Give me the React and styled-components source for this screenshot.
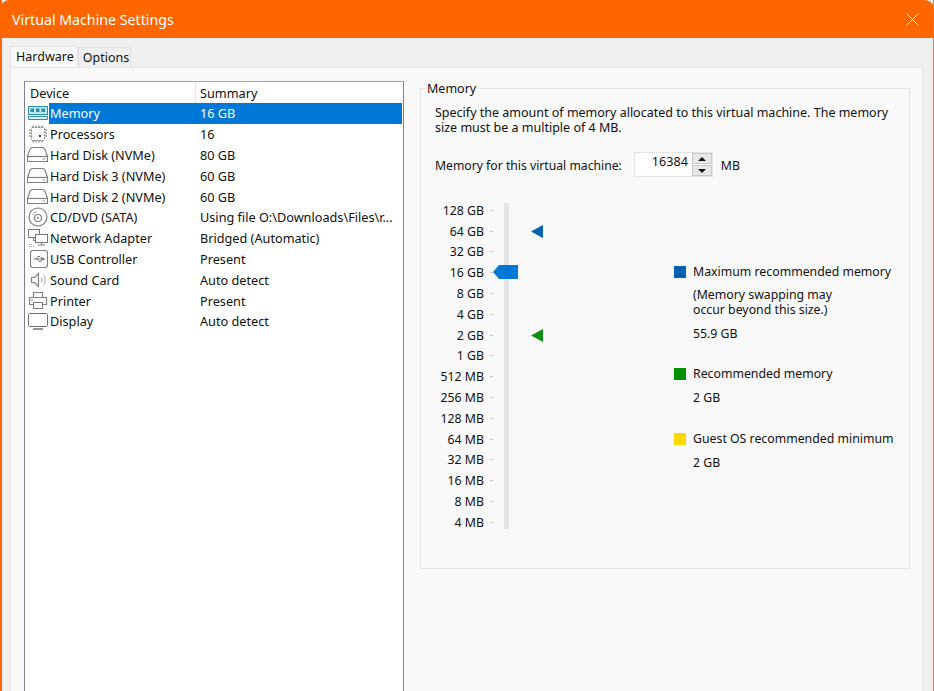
import styled, { createGlobalStyle } from "styled-components";

const GlobalStyle = createGlobalStyle`
  html, body { margin: 0; padding: 0; background: #fff; }
  body { font-family: "Noto Sans", "Open Sans", sans-serif; font-size: 12.3px; color: #111; }
`;

const Window = styled.div`
  width: 934px;
  height: 691px;
  overflow: hidden;
  display: flex;
  flex-direction: column;
  background: #f0f0f0;
  border-left: 2px solid #ff6600;
  border-right: 1px solid #e8772e;
  box-sizing: border-box;
`;

const TitleBar = styled.div`
  height: 38px;
  flex: none;
  margin: 0 -1px 0 -2px;
  display: flex;
  align-items: center;
  justify-content: space-between;
  padding: 0 15px 0 12px;
  background: #ff6600;
  border-radius: 9px 9px 0 0;
  color: #fff;
  font-size: 14.2px;
`;

const Body = styled.div`
  flex: 1;
  min-height: 0;
  padding: 7px 10px 0 8px;
  display: flex;
  flex-direction: column;
`;

const TabStrip = styled.div`
  display: flex;
  height: 22px;
  align-items: flex-end;
  flex: none;
  font-size: 12.5px;
`;

const Tab = styled.div`
  height: ${(p) => (p.$active ? 21 : 20)}px;
  padding: ${(p) => (p.$active ? "0 3px 2px 5px" : "0 1px 0 4px")};
  display: flex;
  align-items: center;
  background: ${(p) => (p.$active ? "#f9f9f9" : "#f0f0f0")};
  border: 1px solid #e2e2e2;
  border-bottom: 0;
  box-sizing: border-box;
`;

const Panel = styled.div`
  flex: 1;
  min-height: 0;
  display: flex;
  gap: 16px;
  padding: 13px 12px 0 13px;
  background: #f9f9f9;
  border: 1px solid #e6e6e6;
  border-bottom: 0;
`;

const DeviceList = styled.div`
  width: 378px;
  flex: none;
  background: #fff;
  border: 1px solid #a0a0a8;
  border-left-color: #80838f;
  border-right-color: #80838f;
  border-bottom: 0;
  font-size: 12.7px;
`;

const HeaderRow = styled.div`
  display: grid;
  grid-template-columns: 170px 1fr;
  height: 21px;
  align-items: center;
`;

const HeaderCell = styled.div`
  height: 100%;
  display: flex;
  align-items: center;
  padding-left: 5px;
  & + & { border-left: 1px solid #e5e5e5; padding-left: 4px; }
`;

const Row = styled.div`
  display: grid;
  grid-template-columns: 24px 146px 1fr;
  height: 20.8px;
  align-items: center;
  margin-right: 1px;
`;

const IconCell = styled.div`
  display: flex;
  align-items: center;
  justify-content: flex-end;
  padding-right: 1px;
`;

const NameCell = styled.div`
  height: 100%;
  display: flex;
  align-items: center;
  padding-left: 1px;
  white-space: nowrap;
  box-sizing: border-box;
  color: ${(p) => (p.$selected ? "#fff" : "inherit")};
  background: ${(p) => (p.$selected ? "#0078d7" : "transparent")};
`;

const SummaryCell = styled(NameCell)`
  padding-left: 5px;
  min-width: 0;
  overflow: hidden;
`;

const GroupBox = styled.fieldset`
  flex: 1;
  margin: 0;
  height: 488px;
  box-sizing: border-box;
  padding: 0 0 0 14px;
  border: 1px solid #e4e4e4;
  min-width: 0;
  legend { margin-left: -8px; padding: 0 3px 0 0; line-height: 15px; font-size: 12.5px; }
`;

const Description = styled.p`
  margin: 9px 0 0 0;
  line-height: 15px;
  width: 470px;
  font-size: 12.5px;
`;

const AmountRow = styled.div`
  display: flex;
  align-items: center;
  margin-top: 17px;
  height: 25px;
`;

const AmountLabel = styled.span`
  padding-top: 2px;
  font-size: 12.2px;
`;

const Spin = styled.div`
  display: flex;
  width: 79px;
  height: 25px;
  margin-left: 12px;
  background: #fff;
  border: 1px solid #e4e4e4;
  box-sizing: border-box;
`;

const SpinValue = styled.div`
  flex: 1;
  text-align: right;
  padding-right: 4px;
  line-height: 17px;
  font-size: 12.6px;
`;

const SpinButtons = styled.div`
  width: 20px;
  display: flex;
  flex-direction: column;
  gap: 1px;
`;

const SpinButton = styled.div`
  flex: 1;
  background: #e8e8e8;
  border: 1px solid #c8c8c8;
  display: flex;
  align-items: center;
  justify-content: center;
  &::before {
    content: "";
    border-left: 4px solid transparent;
    border-right: 4px solid transparent;
    ${(p) => (p.$down ? "border-top: 4px solid #111;" : "border-bottom: 4px solid #111;")}
  }
`;

const Unit = styled.span`
  margin-left: 8px;
  padding-top: 2px;
`;

const MemoryArea = styled.div`
  display: flex;
  margin-top: 23px;
`;

const Scale = styled.div`
  position: relative;
  width: 124px;
`;

const Track = styled.div`
  position: absolute;
  left: 69px;
  top: 3px;
  width: 5px;
  height: 326px;
  background: #e2e4e6;
`;

const ScaleRow = styled.div`
  position: relative;
  display: grid;
  grid-template-columns: 49px 9px 38px 12px;
  height: 20.8px;
  align-items: center;
`;

const ScaleLabel = styled.div`
  text-align: right;
  white-space: nowrap;
`;

const Tick = styled.div`
  width: 3px;
  height: 1px;
  background: #c9c9c9;
  justify-self: end;
`;

const Thumb = styled.svg`
  position: absolute;
  left: 58px;
  top: 3px;
`;

const Marker = styled.svg`
  grid-column: 4;
  display: block;
`;

const Legend = styled.div`
  margin-left: 115px;
  padding-top: 64px;
  display: flex;
  flex-direction: column;
`;

const LegendItem = styled.div`
  display: grid;
  grid-template-columns: 19px 1fr;
  margin-bottom: ${(p) => p.$after}px;
`;

const Swatch = styled.div`
  width: 12px;
  height: 12px;
  margin-top: 2px;
  background: ${(p) => p.$color};
`;

const LegendTitle = styled.div`
  line-height: 16px;
  white-space: nowrap;
`;

const LegendNote = styled.div`
  grid-column: 2;
  margin-top: ${(p) => p.$top}px;
  line-height: 15px;
  white-space: nowrap;
`;

const stroke = { fill: "none", stroke: "#808080", strokeWidth: 1.2 };

const icons = {
  memory: (
    <svg width="20" height="16" viewBox="0 0 20 16">
      <rect x="0.5" y="1.5" width="19" height="8" fill="#bfe6ee" stroke="#2f8fa8" />
      <rect x="2.5" y="3.5" width="3.5" height="3.5" fill="#2f8fa8" />
      <rect x="8" y="3.5" width="3.5" height="3.5" fill="#2f8fa8" />
      <rect x="13.5" y="3.5" width="3.5" height="3.5" fill="#2f8fa8" />
      <path d="M0.5 11.5h19v3h-19z" fill="#d6f0f4" stroke="#2f8fa8" />
    </svg>
  ),
  cpu: (
    <svg width="20" height="18" viewBox="0 0 20 18">
      <rect x="3.5" y="2.5" width="13" height="13" rx="1" fill="#fff" stroke="#8a8a8a" strokeDasharray="2 1" />
      <path d="M5 0.5v2M8 0.5v2M11 0.5v2M14 0.5v2M5 15.5v2M8 15.5v2M11 15.5v2M14 15.5v2M1 5h2M1 8h2M1 11h2M17 5h2M17 8h2M17 11h2" stroke="#666" />
      <rect x="11" y="10" width="2" height="2" fill="#333" />
    </svg>
  ),
  disk: (
    <svg width="21" height="17" viewBox="0 0 21 17">
      <path d="M5 1.5h11l2 1.500 2.500 7.500v5h-20v-5l2.500-7.500z" {...stroke} />
      <path d="M0.500 10.500h20" {...stroke} />
      <path d="M15.500 13h3" stroke="#9a9a9a" />
    </svg>
  ),
  cd: (
    <svg width="20" height="20" viewBox="0 0 20 20">
      <circle cx="10" cy="10" r="9" {...stroke} />
      <circle cx="10" cy="11" r="3.500" {...stroke} />
      <path d="M4.500 8a6 6 0 0 1 4-3.500" stroke="#a5a5a5" fill="none" />
      <circle cx="10" cy="11" r="1" fill="#7d7d7d" />
    </svg>
  ),
  network: (
    <svg width="20" height="18" viewBox="0 0 20 18">
      <path d="M1 17.500h6M1 15.500h3" stroke="#aaa" strokeDasharray="1 1" />
      <rect x="0.500" y="0.500" width="11" height="8" fill="#fff" stroke="#777" />
      <rect x="7.500" y="5.500" width="12" height="8" fill="#fff" stroke="#777" />
      <path d="M13.500 13.500v2M10 16h7" stroke="#777" fill="none" />
      <path d="M5.500 8.500v3h2" stroke="#777" fill="none" />
    </svg>
  ),
  usb: (
    <svg width="18" height="18" viewBox="0 0 18 18">
      <rect x="0.500" y="0.500" width="17" height="17" rx="2.500" {...stroke} />
      <path d="M3.500 9h10M11.500 7.500l3 1.500-3 1.500zM6 9l2-2.500h2M7 9l2 2.500h2" stroke="#777" fill="none" />
    </svg>
  ),
  sound: (
    <svg width="18" height="16" viewBox="0 0 18 16">
      <path d="M1.500 5.500h3l4-4v13l-4-4h-3z" {...stroke} />
      <path d="M11 5.500a3.500 3.500 0 0 1 0 5M13.500 3.500a6.500 6.500 0 0 1 0 9" stroke="#9a9a9a" fill="none" />
    </svg>
  ),
  printer: (
    <svg width="20" height="17" viewBox="0 0 20 17">
      <path d="M5.500 5.500v-5h9v5" {...stroke} />
      <path d="M5.500 12.500h-4v-7h17v7h-4" {...stroke} />
      <rect x="5.500" y="10.500" width="9" height="6" fill="#fff" stroke="#7d7d7d" />
      <path d="M3 8h2" stroke="#7d7d7d" />
    </svg>
  ),
  display: (
    <svg width="20" height="17" viewBox="0 0 20 17">
      <rect x="0.500" y="0.500" width="19" height="13" rx="1" fill="#fff" stroke="#6f6f6f" />
      <path d="M5 16h10" stroke="#6f6f6f" strokeWidth="1.500" />
    </svg>
  ),
};

const devices = [
  { icon: "memory", name: "Memory", summary: "16 GB" },
  { icon: "cpu", name: "Processors", summary: "16" },
  { icon: "disk", name: "Hard Disk (NVMe)", summary: "80 GB" },
  { icon: "disk", name: "Hard Disk 3 (NVMe)", summary: "60 GB" },
  { icon: "disk", name: "Hard Disk 2 (NVMe)", summary: "60 GB" },
  { icon: "cd", name: "CD/DVD (SATA)", summary: "Using file O:\\Downloads\\Files\\r..." },
  { icon: "network", name: "Network Adapter", summary: "Bridged (Automatic)" },
  { icon: "usb", name: "USB Controller", summary: "Present" },
  { icon: "sound", name: "Sound Card", summary: "Auto detect" },
  { icon: "printer", name: "Printer", summary: "Present" },
  { icon: "display", name: "Display", summary: "Auto detect" },
];

const scale = [
  "128 GB", "64 GB", "32 GB", "16 GB", "8 GB", "4 GB", "2 GB", "1 GB",
  "512 MB", "256 MB", "128 MB", "64 MB", "32 MB", "16 MB", "8 MB", "4 MB",
];

const markers = { "64 GB": "#0063b1", "2 GB": "#109010" };

export default function App() {
  return (
    <Window>
      <GlobalStyle />
      <TitleBar>
        <span>Virtual Machine Settings</span>
        <svg width="13" height="13" viewBox="0 0 13 13">
          <path d="M0.500 0.500l12 12M12.500 0.500l-12 12" stroke="#fff" strokeWidth="1" fill="none" />
        </svg>
      </TitleBar>
      <Body>
        <TabStrip>
          <Tab $active>Hardware</Tab>
          <Tab>Options</Tab>
        </TabStrip>
        <Panel>
          <DeviceList>
            <HeaderRow>
              <HeaderCell>Device</HeaderCell>
              <HeaderCell>Summary</HeaderCell>
            </HeaderRow>
            {devices.map((d, i) => (
              <Row key={d.name}>
                <IconCell>{icons[d.icon]}</IconCell>
                <NameCell $selected={i === 0}>{d.name}</NameCell>
                <SummaryCell $selected={i === 0}>{d.summary}</SummaryCell>
              </Row>
            ))}
          </DeviceList>
          <GroupBox>
            <legend>Memory</legend>
            <Description>
              Specify the amount of memory allocated to this virtual machine. The memory size must be a multiple of 4 MB.
            </Description>
            <AmountRow>
              <AmountLabel>Memory for this virtual machine:</AmountLabel>
              <Spin>
                <SpinValue>16384</SpinValue>
                <SpinButtons>
                  <SpinButton />
                  <SpinButton $down />
                </SpinButtons>
              </Spin>
              <Unit>MB</Unit>
            </AmountRow>
            <MemoryArea>
              <Scale>
                <Track />
                {scale.map((label) => (
                  <ScaleRow key={label}>
                    <ScaleLabel>{label}</ScaleLabel>
                    <Tick />
                    {label === "16 GB" && (
                      <Thumb width="25" height="14" viewBox="0 0 25 14">
                        <path d="M0 7L4 2.500L6 0H25V14H6L4 11.500Z" fill="#0078d7" />
                      </Thumb>
                    )}
                    {markers[label] && (
                      <Marker width="12" height="13" viewBox="0 0 12 13">
                        <path d="M0 6.500L12 0V13Z" fill={markers[label]} />
                      </Marker>
                    )}
                  </ScaleRow>
                ))}
              </Scale>
              <Legend>
                <LegendItem $after={25}>
                  <Swatch $color="#0063b1" />
                  <LegendTitle>Maximum recommended memory</LegendTitle>
                  <LegendNote $top={7}>(Memory swapping may<br />occur beyond this size.)</LegendNote>
                  <LegendNote $top={9}>55.9 GB</LegendNote>
                </LegendItem>
                <LegendItem $after={26}>
                  <Swatch $color="#009000" />
                  <LegendTitle>Recommended memory</LegendTitle>
                  <LegendNote $top={8}>2 GB</LegendNote>
                </LegendItem>
                <LegendItem $after={0}>
                  <Swatch $color="#ffd800" />
                  <LegendTitle>Guest OS recommended minimum</LegendTitle>
                  <LegendNote $top={8}>2 GB</LegendNote>
                </LegendItem>
              </Legend>
            </MemoryArea>
          </GroupBox>
        </Panel>
      </Body>
    </Window>
  );
}
